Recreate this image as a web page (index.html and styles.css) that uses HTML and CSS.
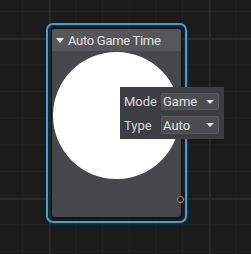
FILE: index.html
```html
<!DOCTYPE html>
<html lang="en">
<head>
    <meta charset="UTF-8">
    <title>Auto Game Time</title>
    <link rel="stylesheet" href="styles.css">
</head>
<body>
    <!-- Lienzo del grafo -->
    <div class="canvas">
        <div class="node-frame">
            <div class="node">
                <div class="node-header">
                    <span class="caret"></span>
                    <span class="node-title">Auto Game Time</span>
                </div>
                <div class="node-body">
                    <div class="preview"></div>
                </div>
            </div>
        </div>
        <div class="pin"></div>

        <!-- Panel de propiedades -->
        <div class="props">
            <div class="prop-row">
                <span class="prop-label">Mode</span>
                <div class="select">Game<span class="select-arrow"></span></div>
            </div>
            <div class="prop-row">
                <span class="prop-label">Type</span>
                <div class="select tall">Auto<span class="select-arrow"></span></div>
            </div>
        </div>
    </div>
</body>
</html>
```
FILE: styles.css
```css
body {
    margin: 0;
    font-family: Roboto, "Liberation Sans", sans-serif;
    background-color: #1b1b1b;
}

/* Lienzo con cuadricula */
.canvas {
    position: relative;
    width: 251px;
    height: 254px;
    overflow: hidden;
    background-color: #1b1b1b;
    background-image:
        linear-gradient(to right, #2a2a2a 0, #2a2a2a 2px, transparent 2px),
        linear-gradient(to bottom, #2a2a2a 0, #2a2a2a 2px, transparent 2px),
        linear-gradient(to right, #212121 0, #212121 1px, transparent 1px),
        linear-gradient(to bottom, #212121 0, #212121 1px, transparent 1px);
    background-size: 160px 160px, 160px 160px, 26.667px 26.667px, 26.667px 26.667px;
    background-position: 49px 0, 0 38px, 22px 0, 0 11px;
}

.node-frame {
    position: absolute;
    left: 46px;
    top: 23px;
    width: 129px;
    height: 188px;
    border: 2px solid #2ba8e0;
    border-radius: 7px;
    padding: 4px;
}

.node {
    height: 100%;
    background-color: #47484b;
    border-radius: 3px;
    overflow: hidden;
    display: flex;
    flex-direction: column;
    box-shadow: 0 0 2px 1px rgba(0, 0, 0, 0.6);
}

.node-header {
    height: 22px;
    background-color: #56575a;
    display: flex;
    align-items: center;
    padding-left: 4px;
    gap: 4px;
}

.caret {
    width: 0;
    height: 0;
    border-left: 4px solid transparent;
    border-right: 4px solid transparent;
    border-top: 5px solid #e8e8e8;
    margin-top: 1px;
}

.node-title {
    color: #e6e6e6;
    font-size: 13px;
    letter-spacing: -0.3px;
}

.node-body {
    flex: 1;
    padding: 1px 0 0 1px;
}

.preview {
    width: 127px;
    height: 127px;
    border-radius: 50%;
    background-color: #ffffff;
}

.pin {
    position: absolute;
    left: 177px;
    top: 196px;
    width: 5px;
    height: 5px;
    border: 1.5px solid #dc7a80;
    border-radius: 50%;
    background-color: #141414;
}

/* Panel de propiedades */
.props {
    position: absolute;
    left: 120px;
    top: 87px;
    width: 104px;
    height: 52px;
    box-sizing: border-box;
    background-color: #3d3e41;
    padding: 6px 5px 0 4px;
    display: flex;
    flex-direction: column;
    gap: 6px;
}

.prop-row {
    display: flex;
    align-items: center;
    justify-content: space-between;
}

.prop-label {
    color: #dcdcdc;
    font-size: 13px;
}

.select {
    width: 58px;
    height: 17px;
    box-sizing: border-box;
    background-color: #4c4d51;
    border: 1px solid #5a5b5f;
    border-radius: 2px;
    color: #e6e6e6;
    font-size: 13px;
    line-height: 15px;
    padding-left: 1px;
    display: flex;
    align-items: center;
    justify-content: space-between;
}

.select.tall {
    height: 18px;
}

.select-arrow {
    width: 0;
    height: 0;
    border-left: 4px solid transparent;
    border-right: 4px solid transparent;
    border-top: 4px solid #e0e0e0;
    margin-right: 4px;
}
```
